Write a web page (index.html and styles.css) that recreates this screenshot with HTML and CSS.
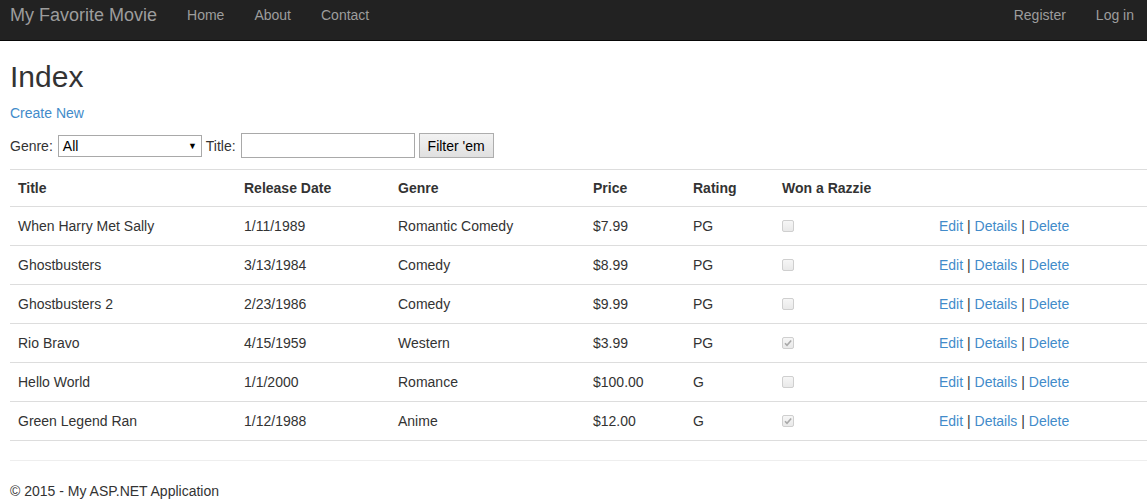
FILE: index.html
```html
<!DOCTYPE html>
<html>
<head>
<meta charset="utf-8">
<title>Index</title>
<link rel="stylesheet" href="styles.css">
</head>
<body>
<header class="navbar">
  <div class="nav-left">
    <a class="brand" href="#">My Favorite Movie</a>
    <a class="nav-link" href="#">Home</a>
    <a class="nav-link" href="#">About</a>
    <a class="nav-link" href="#">Contact</a>
  </div>
  <div class="nav-right">
    <a class="nav-link" href="#">Register</a>
    <a class="nav-link" href="#">Log in</a>
  </div>
</header>
<main class="content">
  <h2 class="title">Index</h2>
  <p class="create"><a href="#">Create New</a></p>
  <form class="filter">
    <label class="lbl">Genre:</label>
    <span class="select"><span>All</span><span class="arrow">&#9660;</span></span>
    <label class="lbl">Title:</label>
    <span class="textbox"></span>
    <span class="btn">Filter 'em</span>
  </form>
  <table class="movies">
    <colgroup>
      <col class="c1"><col class="c2"><col class="c3"><col class="c4"><col class="c5"><col class="c6"><col>
    </colgroup>
    <thead>
      <tr><th>Title</th><th>Release Date</th><th>Genre</th><th>Price</th><th>Rating</th><th>Won a Razzie</th><th></th></tr>
    </thead>
    <tbody>
      <tr><td>When Harry Met Sally</td><td>1/11/1989</td><td>Romantic Comedy</td><td>$7.99</td><td>PG</td><td><span class="cb"></span></td><td class="act"><a href="#">Edit</a> | <a href="#">Details</a> | <a href="#">Delete</a></td></tr>
      <tr><td>Ghostbusters</td><td>3/13/1984</td><td>Comedy</td><td>$8.99</td><td>PG</td><td><span class="cb"></span></td><td class="act"><a href="#">Edit</a> | <a href="#">Details</a> | <a href="#">Delete</a></td></tr>
      <tr><td>Ghostbusters 2</td><td>2/23/1986</td><td>Comedy</td><td>$9.99</td><td>PG</td><td><span class="cb"></span></td><td class="act"><a href="#">Edit</a> | <a href="#">Details</a> | <a href="#">Delete</a></td></tr>
      <tr><td>Rio Bravo</td><td>4/15/1959</td><td>Western</td><td>$3.99</td><td>PG</td><td><span class="cb checked"><svg viewBox="0 0 12 12" width="12" height="12"><path d="M3 6.2 L5 8.3 L9.2 3.4" fill="none" stroke="#a9a9a9" stroke-width="1.6"/></svg></span></td><td class="act"><a href="#">Edit</a> | <a href="#">Details</a> | <a href="#">Delete</a></td></tr>
      <tr><td>Hello World</td><td>1/1/2000</td><td>Romance</td><td>$100.00</td><td>G</td><td><span class="cb"></span></td><td class="act"><a href="#">Edit</a> | <a href="#">Details</a> | <a href="#">Delete</a></td></tr>
      <tr><td>Green Legend Ran</td><td>1/12/1988</td><td>Anime</td><td>$12.00</td><td>G</td><td><span class="cb checked"><svg viewBox="0 0 12 12" width="12" height="12"><path d="M3 6.2 L5 8.3 L9.2 3.4" fill="none" stroke="#a9a9a9" stroke-width="1.6"/></svg></span></td><td class="act"><a href="#">Edit</a> | <a href="#">Details</a> | <a href="#">Delete</a></td></tr>
    </tbody>
  </table>
  <hr class="rule">
  <footer class="foot">&copy; 2015 - My ASP.NET Application</footer>
</main>
</body>
</html>
```
FILE: styles.css
```css
html, body {
  margin: 0;
  padding: 0;
  background: #fff;
  overflow: hidden;
}
body {
  font-family: "Liberation Sans", Arial, sans-serif;
  font-size: 14px;
  line-height: 20px;
  color: #333;
}
a {
  color: #428bca;
  text-decoration: none;
}
.navbar {
  height: 41px;
  background: #222;
  border-bottom: 1px solid #080808;
  box-sizing: border-box;
  display: flex;
  justify-content: space-between;
  align-items: flex-start;
  padding: 5px 0 0 10px;
}
.nav-left, .nav-right {
  display: flex;
}
.nav-right {
  margin-right: -2px;
}
.brand {
  color: #9d9d9d;
  font-size: 18px;
  line-height: 20px;
  padding-right: 15px;
}
.nav-link {
  color: #9d9d9d;
  padding: 0 15px;
  line-height: 20px;
}
.content {
  padding: 0 0 0 10px;
}
.title {
  font-size: 30px;
  font-weight: 500;
  line-height: 33px;
  margin: 19px 0 0;
  font-family: "Liberation Sans", Arial, sans-serif;
}
.create {
  margin: 10px 0 0;
  line-height: 20px;
}
.filter {
  display: flex;
  align-items: center;
  height: 25px;
  margin-top: 10px;
}
.lbl {
  margin-right: 4px;
}
.select {
  box-sizing: border-box;
  width: 144px;
  height: 22px;
  border: 1px solid #a9a9a9;
  display: flex;
  align-items: center;
  justify-content: space-between;
  padding: 0 4px 0 4px;
  margin-left: 1px;
  margin-right: 4px;
  color: #000;
}
.arrow {
  font-size: 9px;
  color: #000;
}
.textbox {
  box-sizing: border-box;
  width: 174px;
  height: 25px;
  border: 1px solid #a9a9a9;
  margin-left: 1px;
  margin-right: 4px;
}
.btn {
  box-sizing: border-box;
  width: 75px;
  height: 25px;
  border: 1px solid #adadad;
  background: linear-gradient(#f2f2f2, #e0e0e0);
  color: #000;
  display: flex;
  align-items: center;
  justify-content: center;
}
.movies {
  margin-top: 11px;
  width: 1137px;
  border-collapse: collapse;
  table-layout: fixed;
}
.c1 { width: 226px; }
.c2 { width: 154px; }
.c3 { width: 195px; }
.c4 { width: 100px; }
.c5 { width: 89px; }
.c6 { width: 157px; }
.movies th {
  text-align: left;
  font-weight: bold;
  padding: 8px;
  border-top: 1px solid #ddd;
  border-bottom: 1px solid #ddd;
  line-height: 20px;
}
.movies td {
  padding: 9px 8px;
  line-height: 20px;
  border-bottom: 1px solid #ddd;
  vertical-align: middle;
}
.cb {
  display: block;
  box-sizing: border-box;
  width: 12px;
  height: 12px;
  border: 1px solid #cfcfcf;
  border-radius: 2px;
  background: linear-gradient(#f6f6f6, #e9e9e9);
  position: relative;
}
.cb svg {
  position: absolute;
  left: -1px;
  top: -1px;
}
.act {
  color: #333;
}
.rule {
  border: 0;
  border-top: 1px solid #eee;
  margin: 19px 0 0;
}
.foot {
  margin-top: 20px;
  line-height: 20px;
}
```
